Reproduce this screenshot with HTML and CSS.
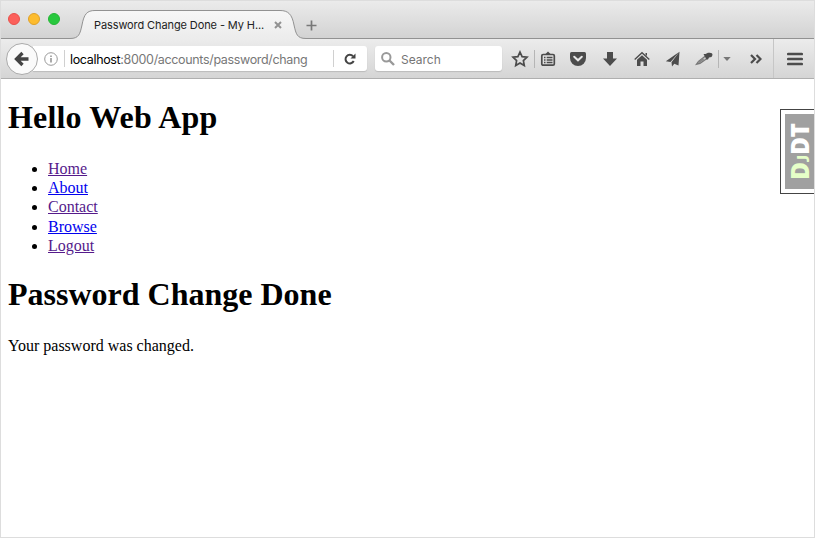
FILE: index.html
```html
<!DOCTYPE html>
<html lang="en">
<head>
<meta charset="utf-8">
<title>Password Change Done - My Hello Web App</title>
<link rel="stylesheet" href="styles.css">
</head>
<body>
<div class="window">
  <header class="tabstrip">
    <div class="lights"><i class="light close"></i><i class="light minimize"></i><i class="light maximize"></i></div>
    <svg class="tab-shape" width="813" height="38" viewBox="1 1 813 38">
      <defs><linearGradient id="tab" x1="0" y1="0" x2="0" y2="1"><stop offset="0" stop-color="#f7f7f7"/><stop offset="1" stop-color="#ececec"/></linearGradient></defs>
      <path d="M70 39C79 38.500 80 34 82 25C84 14 87 10.500 95 10.500H280C288 10.500 292 14 294 25C296 34 297 38.500 306 39Z" fill="url(#tab)"/>
      <path d="M1 38.500H70C79 38.500 80 34 82 25C84 14 87 10.500 95 10.500H280C288 10.500 292 14 294 25C296 34 297 38.500 306 38.500H814" fill="none" stroke="#929292"/>
    </svg>
    <div class="tab-title">Password Change Done - My H...</div>
    <svg class="tab-close" width="8" height="8" viewBox="0 0 8 8"><path d="M1 1L7 7M7 1L1 7" stroke="#929292" stroke-width="2"/></svg>
    <svg class="tab-new" width="11" height="11" viewBox="0 0 11 11"><path d="M5.500 .5V10.500M.5 5.500H10.500" stroke="#787878" stroke-width="1.700"/></svg>
  </header>
  <nav class="toolbar">
    <div class="back"><svg width="16" height="16" viewBox="0 0 16 16"><path d="M8.500 2L2.500 8L8.500 14M3 8H14.500" fill="none" stroke="#444" stroke-width="3.300"/></svg></div>
    <div class="address">
      <svg class="info" width="14" height="14" viewBox="0 0 14 14"><circle cx="7" cy="7" r="6.300" fill="none" stroke="#999"/><path d="M7 6V10.500M7 3.400V5" stroke="#888" stroke-width="1.400"/></svg>
      <div class="url"><b>localhost</b>:8000/accounts/password/chang</div>
      <svg class="reload" width="12" height="12" viewBox="0 0 12 12"><path d="M9 3.200A4.300 4.300 0 1 0 9.700 8" fill="none" stroke="#444" stroke-width="2"/><path d="M11.500 .5V5.500H6.500Z" fill="#444"/></svg>
    </div>
    <div class="search">
      <svg width="14" height="14" viewBox="0 0 14 14"><circle cx="5.300" cy="5.300" r="4.200" fill="none" stroke="#999" stroke-width="2"/><path d="M8.500 8.500L13 13" stroke="#999" stroke-width="2.400"/></svg>
      <span>Search</span>
    </div>
    <div class="tool star"><svg width="18" height="18" viewBox="0 0 18 18"><path d="M9 2L11.100 6.600L16 7.200L12.400 10.600L13.300 15.600L9 13.100L4.700 15.600L5.600 10.600L2 7.200L6.900 6.600Z" fill="none" stroke="#4c4c4c" stroke-width="1.700"/></svg></div>
    <div class="tool list"><svg width="16" height="16" viewBox="0 0 16 16"><path d="M5 3.500L8 .5L11 3.500Z" fill="#4c4c4c"/><rect x="1.800" y="3.500" width="12.500" height="10.700" rx="1.300" fill="none" stroke="#4c4c4c" stroke-width="1.700"/><path d="M4 6.500H5.500M4 9H5.500M4 11.500H5.500M6.700 6.500H12.500M6.700 9H12.500M6.700 11.500H12.500" stroke="#4c4c4c" stroke-width="1.500"/></svg></div>
    <div class="tool"><svg width="16" height="16" viewBox="0 0 16 16"><path d="M1.500 1H14.500Q16 1 16 2.500V7A8 8 0 0 1 0 7V2.500Q0 1 1.500 1Z" fill="#4c4c4c"/><path d="M4.200 5.700L8 9.300L11.800 5.700" fill="none" stroke="#e8e8e8" stroke-width="2" stroke-linecap="round"/></svg></div>
    <div class="tool"><svg width="16" height="16" viewBox="0 0 16 16"><path d="M5 1H11V7.500H15L8 15L1 7.500H5Z" fill="#4c4c4c"/></svg></div>
    <div class="tool"><svg width="16" height="16" viewBox="0 0 16 16"><path d="M.7 8.500L8 1.800L15.300 8.500" fill="none" stroke="#4c4c4c" stroke-width="1.400"/><path d="M8 4.200L13 8.800V15H9.500V10.500H6.500V15H3V8.800ZM11.500 2H13V5L11.500 3.700Z" fill="#4c4c4c"/></svg></div>
    <div class="tool plane"><svg width="16" height="16" viewBox="0 0 16 16"><path d="M14.500 .8L.8 10.200L5.500 11ZM14.500 .8L6.500 11.300L7 15.500L9.300 12.700L13.500 14.500Z" fill="#4c4c4c"/></svg></div>
    <div class="tool dropper"><svg width="18" height="16" viewBox="0 0 18 16"><path d="M10.500 5L3.500 10.500L1.500 13.200L5 12.300L12 7.500" fill="#ccc" stroke="#777" stroke-width="1.300"/><path d="M3.500 11.500L8.500 8" stroke="#888" stroke-width="2"/><path d="M8.500 3L10.500 3L13 1.800Q17.500 1 17.500 4L16.500 6L14 6.500L13 8.500L11.500 8.500Z" fill="#4c4c4c"/></svg></div>
    <div class="tool caret"><svg width="8" height="6" viewBox="0 0 8 6"><path d="M.3 1H7.700L4 5Z" fill="#777"/></svg></div>
    <div class="tool more"><svg width="12" height="10" viewBox="0 0 12 10"><path d="M1 1L5 5L1 9M6.500 1L10.500 5L6.500 9" fill="none" stroke="#4c4c4c" stroke-width="2.200"/></svg></div>
    <div class="tool menu"><svg width="16" height="14" viewBox="0 0 16 14"><path d="M1.300 2H14.700M1.300 7H14.700M1.300 12H14.700" stroke="#4c4c4c" stroke-width="2.700" stroke-linecap="round"/></svg></div>
  </nav>
  <main class="page">
    <h1>Hello Web App</h1>
    <ul>
      <li><a class="visited" href="#">Home</a></li>
      <li><a href="#">About</a></li>
      <li><a class="visited" href="#">Contact</a></li>
      <li><a href="#">Browse</a></li>
      <li><a class="visited" href="#">Logout</a></li>
    </ul>
    <h1 class="second">Password Change Done</h1>
    <p>Your password was changed.</p>
    <aside class="debug"><div class="debug-label"><span><em>D<small>J</small></em>DT</span></div></aside>
  </main>
</div>
</body>
</html>
```
FILE: styles.css
```css
* { box-sizing: border-box; }
body { margin: 0; background: #fff; }
svg { display: block; flex: none; }
.window { width: 815px; height: 538px; border: 1px solid #ddd; overflow: hidden; display: flex; flex-direction: column; }
.tabstrip { position: relative; height: 38px; flex: none; display: flex; align-items: flex-start; background: linear-gradient(#ebebeb, #d2d2d2); font-family: Inter, sans-serif; }
.tab-shape { position: absolute; left: 0; top: 0; }
.lights { display: flex; gap: 8px; padding: 12px 0 0 7px; width: 93px; flex: none; }
.light { width: 12px; height: 12px; border-radius: 50%; border: 1px solid; }
.close { background: #fc605b; border-color: #e9504b; }
.minimize { background: #fdbc2e; border-color: #e0a127; }
.maximize { background: #28c83e; border-color: #25b635; }
.tab-title { position: relative; width: 180px; font-size: 11px; line-height: 16px; margin-top: 16px; white-space: nowrap; color: #222; letter-spacing: -.1px; }
.tab-close { position: relative; margin: 20px 0 0; }
.tab-new { position: relative; margin: 19px 0 0 24px; }
.toolbar { height: 40px; flex: none; display: flex; align-items: center; background: linear-gradient(#ececec, #d5d5d5); border-bottom: 1px solid #afafaf; font-family: Inter, sans-serif; padding-left: 5px; }
.back { position: relative; z-index: 1; width: 32px; height: 32px; flex: none; border: 1px solid #aaa; border-radius: 50%; background: #fafafa; display: flex; align-items: center; justify-content: center; }
.address { width: 334px; height: 25px; margin-left: -5px; padding-left: 11px; flex: none; display: flex; align-items: center; background: #fff; border-radius: 0 3px 3px 0; box-shadow: 0 1px 1px #bbb; }
.url { width: 270px; height: 17px; margin-left: 6px; padding-left: 5px; border-left: 1px solid #d0d0d0; border-right: 1px solid #d0d0d0; font-size: 12.500px; letter-spacing: -.34px; line-height: 19px; color: #777; white-space: nowrap; }
.url b { font-weight: 400; color: #000; }
.reload { margin-left: 10px; }
.search { width: 127px; height: 25px; margin-left: 8px; margin-right: 2px; padding-left: 6px; flex: none; display: flex; align-items: center; gap: 6px; background: #fff; border-radius: 3px; box-shadow: 0 1px 1px #bbb; font-size: 12px; line-height: 18px; color: #757575; }
.search span { padding-top: 2px; }
.tool { width: 32px; height: 18px; flex: none; display: flex; align-items: center; justify-content: center; }
.star { width: 31px; border-right: 1px solid #b5b5b5; padding-left: 2px; }
.list { width: 27px; padding-right: 2px; }
.plane { width: 30px; }
.dropper { width: 31px; border-right: 1px solid #b5b5b5; padding-left: 2px; }
.caret { width: 15px; }
.more { width: 39px; padding-left: 4px; }
.menu { width: 41px; height: 39px; border-left: 1px solid #c6c6c6; padding-left: 2px; }
.page { position: relative; flex: 1; padding: 0 7px; font: 16px/19.200px "Liberation Serif", serif; color: #000; }
.page h1 { font-size: 32px; line-height: 37px; margin: 20px 0 23px; letter-spacing: .15px; }
.page ul { margin: 0; padding-left: 40px; }
.page a { color: #00e; }
.page a.visited { color: #551a8b; }
.page .second { margin: 21px 0 23px; letter-spacing: 0; }
.page p { margin: 0; }
.debug { position: absolute; right: 0; top: 30px; width: 34px; height: 85px; border: 1px solid #444; border-right: 0; padding: 4px 0 4px 4px; background: #fff; }
.debug-label { height: 75px; background: #a0a0a0; display: flex; align-items: center; justify-content: center; }
.debug-label span { writing-mode: vertical-rl; text-orientation: sideways; transform: rotate(180deg); font: 800 24px/28px "Open Sans", sans-serif; color: #fff; }
.debug-label em { font-style: normal; color: #e6ffc8; }
.debug-label small { font: 900 17px/20px Lato, sans-serif; }
```
